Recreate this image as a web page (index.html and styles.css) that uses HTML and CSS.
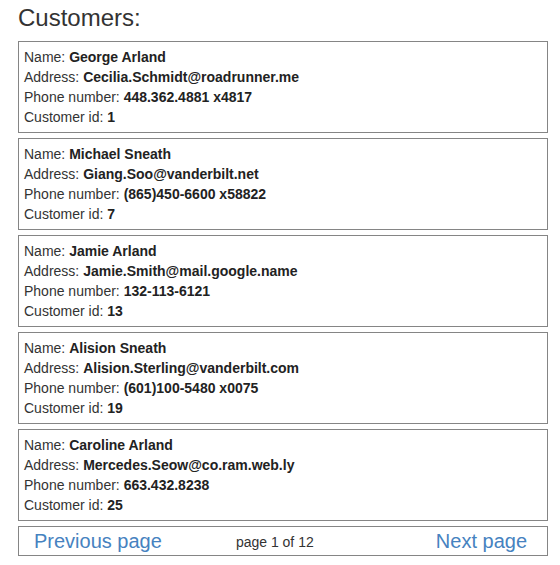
FILE: index.html
```html
<!DOCTYPE html>
<html>
<head>
<meta charset="utf-8">
<link rel="stylesheet" href="styles.css">
</head>
<body>
<div class="page">
  <h1 class="title">Customers:</h1>
  <div class="list">
    <div class="card">
      <div>Name: <b>George Arland</b></div>
      <div>Address: <b>Cecilia.Schmidt@roadrunner.me</b></div>
      <div>Phone number: <b>448.362.4881 x4817</b></div>
      <div>Customer id: <b>1</b></div>
    </div>
    <div class="card">
      <div>Name: <b>Michael Sneath</b></div>
      <div>Address: <b>Giang.Soo@vanderbilt.net</b></div>
      <div>Phone number: <b>(865)450-6600 x58822</b></div>
      <div>Customer id: <b>7</b></div>
    </div>
    <div class="card">
      <div>Name: <b>Jamie Arland</b></div>
      <div>Address: <b>Jamie.Smith@mail.google.name</b></div>
      <div>Phone number: <b>132-113-6121</b></div>
      <div>Customer id: <b>13</b></div>
    </div>
    <div class="card">
      <div>Name: <b>Alision Sneath</b></div>
      <div>Address: <b>Alision.Sterling@vanderbilt.com</b></div>
      <div>Phone number: <b>(601)100-5480 x0075</b></div>
      <div>Customer id: <b>19</b></div>
    </div>
    <div class="card">
      <div>Name: <b>Caroline Arland</b></div>
      <div>Address: <b>Mercedes.Seow@co.ram.web.ly</b></div>
      <div>Phone number: <b>663.432.8238</b></div>
      <div>Customer id: <b>25</b></div>
    </div>
    <div class="pager">
      <a class="pager-link prev" href="#">Previous page</a>
      <span class="pager-info">page 1 of 12</span>
      <a class="pager-link next" href="#">Next page</a>
    </div>
  </div>
</div>
</body>
</html>
```
FILE: styles.css
```css
html, body {
  margin: 0;
  padding: 0;
  background: #ffffff;
}
body {
  font-family: "Liberation Sans", Arial, sans-serif;
  color: #333333;
  font-size: 14px;
}
.page {
  padding: 0 12px 0 18px;
}
.title {
  margin: 0;
  padding-top: 4px;
  font-size: 24px;
  font-weight: normal;
  line-height: 28px;
  height: 37px;
}
.list {
  display: flex;
  flex-direction: column;
  gap: 5px;
}
.card {
  border: 1px solid #858585;
  padding: 5px 5px;
  line-height: 20px;
}
.card b {
  color: #222222;
}
.pager {
  border: 1px solid #858585;
  height: 28px;
  display: flex;
  align-items: center;
  padding: 0 20px 0 15px;
}
.pager-link {
  color: #4682c0;
  text-decoration: none;
  font-size: 20px;
}
.pager-info {
  margin-left: 74px;
  font-size: 14px;
  padding-top: 2px;
}
.next {
  margin-left: auto;
}
```
